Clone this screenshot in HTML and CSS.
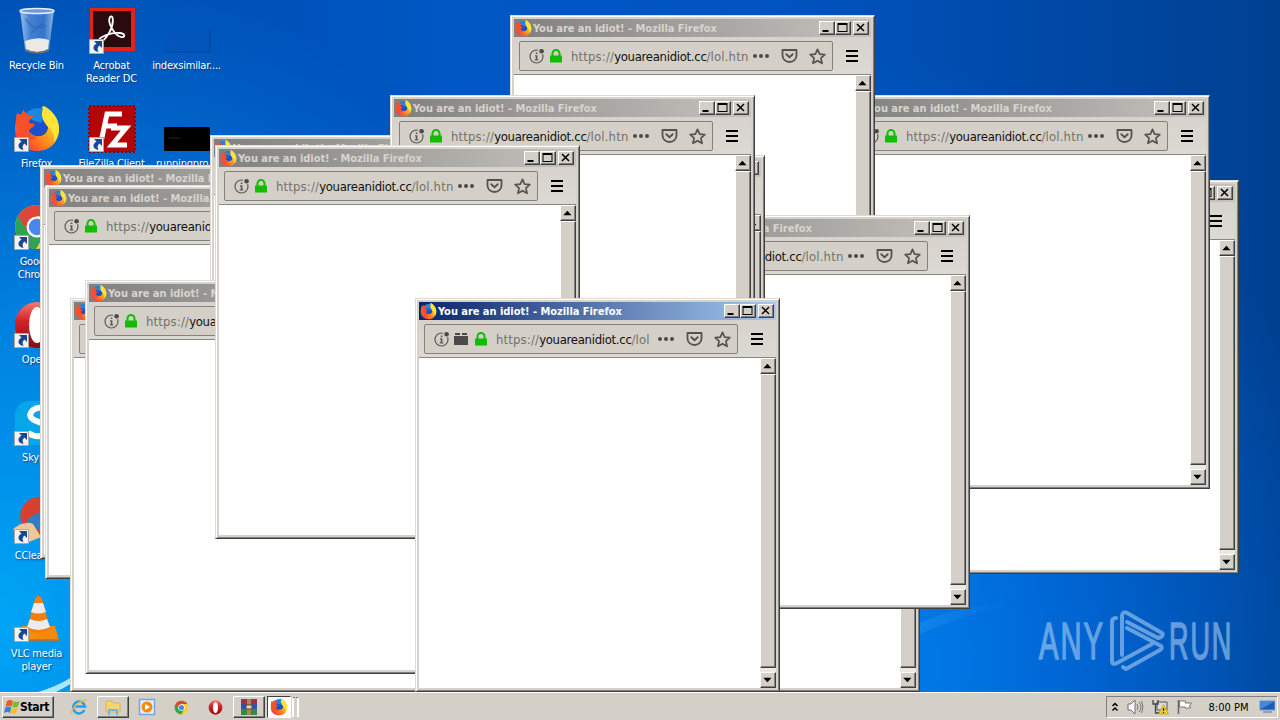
FILE: index.html
```html
<!DOCTYPE html>
<html lang="en">
<head>
<meta charset="UTF-8">
<meta name="viewport" content="width=device-width, initial-scale=1.0">
<title>Desktop</title>
<link rel="stylesheet" href="styles.css">
</head>
<body>
<svg class="defs" width="0" height="0">
    <defs>
        <linearGradient id="foxGrad" x1="1" y1="0" x2="0.1" y2="0.9">
            <stop offset="0" stop-color="#fff44f"/><stop offset="0.45" stop-color="#ffb01c"/><stop offset="0.75" stop-color="#ff6a22"/><stop offset="1" stop-color="#f0305a"/>
        </linearGradient>
        <linearGradient id="operaGrad" x1="0" y1="0" x2="0" y2="1">
            <stop offset="0" stop-color="#f47a72"/><stop offset="0.4" stop-color="#d4242a"/><stop offset="1" stop-color="#8c0a10"/>
        </linearGradient>
        <linearGradient id="glassGrad" x1="0" y1="0" x2="1" y2="0">
            <stop offset="0" stop-color="#b4d0f0"/><stop offset="0.3" stop-color="#4f8ad8"/><stop offset="0.7" stop-color="#3c7ace"/><stop offset="1" stop-color="#a4c4e8"/>
        </linearGradient>
        <linearGradient id="swoosh" x1="0" y1="0" x2="1" y2="0">
            <stop offset="0" stop-color="#3c9cf4" stop-opacity=".3"/><stop offset="1" stop-color="#3c9cf4" stop-opacity="0"/>
        </linearGradient>
        <symbol id="firefox" viewBox="0 0 48 48">
            <path d="M30 1c8 4 16 12 16 23 0 13-9 22-22 22S2 37 2 25c0-6 1-11 4-14l10 10z" fill="url(#foxGrad)"/>
            <path d="M13 8C18 3 25 2 31 4c4 5 6 13 4 19-1 6-6 9-12 8-6-1-9-6-9-12z" fill="#1a50c8"/>
            <path d="M13 8C18 3 25 2 31 4c0 6-1 11-3 14l-9-3z" fill="#1c86e4"/>
            <path d="M31 1c8 4 15 12 15 23 0 5-2 10-5 13 1-7-2-11-6-15-6-7-8-13-4-21z" fill="#ffe23a"/>
            <path d="M4 8l4 2 2-5 5 5 6 1c-3 2-5 4-5 7l6 1c-1 3-4 4-6 6 0 4 3 7 8 7-3 4-10 5-14 1C4 28 1 18 4 8z" fill="#f8502a"/>
        </symbol>
        <symbol id="chrome" viewBox="0 0 48 48">
            <circle cx="24" cy="24" r="22" fill="#fbcf2c"/>
            <path d="M24 24L5 13A22 22 0 0 0 23 46l11-19z" fill="#2fa353"/>
            <path d="M24 13h19a22 22 0 0 0-38 0l9 14z" fill="#e0453c"/>
            <circle cx="24" cy="24" r="10.5" fill="#fff"/>
            <circle cx="24" cy="24" r="8.2" fill="#4a86ee"/>
        </symbol>
        <symbol id="opera" viewBox="0 0 48 48">
            <ellipse cx="24" cy="24" rx="22" ry="23" fill="url(#operaGrad)"/>
            <ellipse cx="24" cy="24" rx="8" ry="18" fill="#fff"/>
        </symbol>
        <symbol id="shortcut" viewBox="0 0 15 15">
            <path d="M.5.5h14v14H.5z" fill="#f3f3f0" stroke="#a8a8a8"/>
            <path d="M5 2h8v7l-2.500-2.500C8.500 8 8 10 9.500 13 4 12 2.500 7.500 7.500 4.500z" fill="#1b4596"/>
        </symbol>
        <symbol id="info" viewBox="0 0 16 16">
            <circle cx="7.500" cy="8.500" r="6.500" fill="none" stroke="#5b5956" stroke-width="1.200"/>
            <circle cx="12.600" cy="3" r="3.600" fill="#d4d0c8"/>
            <circle cx="12.600" cy="3.200" r="2.300" fill="#4c4a48"/>
            <path d="M6.700 4.500h1.700v1.600H6.700zM6 7.200h2.400v4.300h1v1H5.700v-1h1V8.200H6z" fill="#5b5956"/>
        </symbol>
        <symbol id="lock" viewBox="0 0 14 14">
            <path d="M3.500 7V4.500a3.500 3.500 0 0 1 7 0V7" fill="none" stroke="#12bc00" stroke-width="2"/>
            <path d="M1 6.500h12V13.500H1z" fill="#12bc00"/>
        </symbol>
        <symbol id="addon" viewBox="0 0 14 14">
            <path d="M1 1h5v2H1zM8 1h5v2H8zM0 4h14v9H0z" fill="#4c4a48"/>
        </symbol>
        <symbol id="pocket" viewBox="0 0 16 16">
            <path d="M1 2h14v5.500a7 6.500 0 0 1-14 0z" fill="none" stroke="#55524f" stroke-width="1.800" stroke-linejoin="round"/>
            <path d="M4.800 6.200L8 9.300l3.200-3.100" fill="none" stroke="#55524f" stroke-width="1.900" stroke-linecap="round"/>
        </symbol>
        <symbol id="star" viewBox="0 0 16 16">
            <path d="M8 1.300l2 4.500 4.900.5-3.700 3.200 1.100 4.900L8 11.900l-4.300 2.500 1.100-4.900L1.100 6.300 6 5.800z" fill="none" stroke="#55524f" stroke-width="1.600" stroke-linejoin="round"/>
        </symbol>
    </defs>
</svg>

<div class="desktop">
    <svg class="wallpaper" width="1280" height="692" viewBox="0 0 1280 692">
        <path d="M38 692Q58 686 72 677V683Q64 688 56 692z" fill="#bdf0ff" opacity=".9"/>
        <path d="M915 625Q945 610 1010 600V604Q950 620 915 636z" fill="url(#swoosh)"/>
    </svg>

    <div class="icons">
        <div class="icon">
            <svg viewBox="0 0 48 48">
                <path d="M7 3h34l-5 40q-12 5-24 0z" fill="url(#glassGrad)" opacity=".85"/>
                <path d="M12 34q13-5 24-1l-1 9q-11 6-22 0z" fill="#eceae6"/>
                <path d="M12 42q12 6 24 0v2q-12 5-24 0z" fill="#77706a"/>
                <ellipse cx="24" cy="4" rx="17" ry="2.500" fill="#6b9ad2" stroke="#e4edf6" stroke-width="1.500"/>
                <path d="M13 12q8 14 20 6M18 26l12-10" stroke="#2b62b4" stroke-width="2" fill="none" opacity=".6"/>
            </svg>
            <span>Recycle Bin</span>
        </div>
        <div class="icon">
            <svg viewBox="0 0 48 48">
                <path d="M2 1h45v43H2z" fill="#e2231a"/><path d="M5 4h38v36H5z" fill="#2a0a0c"/>
                <path d="M22 10c4-3 4 8-1 16-4 7-9 11-10 8-1-4 13-9 21-8 6 1 5 5 1 4-7-2-14-15-11-20z" fill="none" stroke="#fff" stroke-width="1.800"/>
            </svg>
            <svg class="arrow"><use href="#shortcut"/></svg>
            <span>Acrobat Reader DC</span>
        </div>
        <div class="icon">
            <svg viewBox="0 0 48 48"><path d="M1 20h46v25H1z" fill="#0852b8" opacity=".4"/><path d="M1 45h46V22" fill="none" stroke="#063c92" stroke-width="1.500" opacity=".5"/></svg>
            <span>indexsimilar....</span>
        </div>
        <div class="icon">
            <svg><use href="#firefox"/></svg>
            <svg class="arrow"><use href="#shortcut"/></svg>
            <span>Firefox</span>
        </div>
        <div class="icon">
            <svg viewBox="0 0 48 48">
                <path d="M1 1h46v46H1z" fill="#b30508" stroke="#8a0406" stroke-width="2" stroke-dasharray="2 2"/>
                <path d="M13 37L19 9H34M16 21H29M23 23H38L24 40H39" fill="none" stroke="#fff" stroke-width="5"/>
            </svg>
            <svg class="arrow"><use href="#shortcut"/></svg>
            <span>FileZilla Client</span>
        </div>
        <div class="icon">
            <svg viewBox="0 0 48 48"><path d="M1 22h46v24H1z" fill="#000"/><path d="M5 33h12" stroke="#222"/></svg>
            <span>runningpro...</span>
        </div>
        <div class="icon">
            <svg><use href="#chrome"/></svg>
            <svg class="arrow"><use href="#shortcut"/></svg>
            <span>Google Chrome</span>
        </div>
        <div class="icon from-left">
            <svg><use href="#opera"/></svg>
            <svg class="arrow"><use href="#shortcut"/></svg>
            <span>Opera</span>
        </div>
        <div class="icon from-left">
            <svg viewBox="0 0 48 48">
                <rect x="2" y="2" width="44" height="44" rx="14" fill="#06a7ea"/>
                <path d="M36 12q-9-6-16-1-6 6 1 10l10 4q8 4 2 10-8 5-18-1" fill="none" stroke="#fff" stroke-width="6"/>
            </svg>
            <svg class="arrow"><use href="#shortcut"/></svg>
            <span>Skype</span>
        </div>
        <div class="icon from-left">
            <svg viewBox="0 0 48 48">
                <path d="M8 24A19 19 0 0 1 44 12v28H20z" fill="#d8402f"/>
                <path d="M40 10L22 17l-8 6 2 8 8 2 16-6z" fill="#2f7ec4"/>
                <path d="M0 32q12-9 20-5l8 13-12 5z" fill="#f6c796"/>
            </svg>
            <svg class="arrow"><use href="#shortcut"/></svg>
            <span>CCleaner</span>
        </div>
        <div class="icon from-left">
            <svg viewBox="0 0 48 48">
                <path d="M9 31h33l4 14H5z" fill="#f58a0b"/>
                <path d="M25 1q3 0 4 3l8 30q-12 8-23 0l8-30q1-3 3-3z" fill="#f57d0a"/>
                <path d="M21 8h9l3 9q-8 3-15 0zM17 24q8 4 17 0l3 8q-12 6-23 0z" fill="#ececec"/>
                <path d="M5 45h42" stroke="#d9690a" stroke-width="1.500"/>
            </svg>
            <svg class="arrow"><use href="#shortcut"/></svg>
            <span>VLC media player</span>
        </div>
    </div>

    <svg class="watermark" width="200" height="70" viewBox="0 0 200 70">
        <g fill="#a9ccf2" stroke="#a9ccf2" stroke-width="1.600">
            <text transform="translate(3 56) scale(.56 1)" x="0" y="0" textLength="114" lengthAdjust="spacing">ANY</text>
            <text transform="translate(133 56) scale(.52 1)" x="0" y="0" textLength="120" lengthAdjust="spacing">RUN</text>
        </g>
        <g fill="none" stroke="#a9ccf2" stroke-width="4" stroke-linecap="round" stroke-linejoin="round">
            <path d="M80 15q-4 0-4 4V59q1 3 5 1L116 41"/>
            <path d="M86 52V12q1-4 5-2L126 30q2 2-1 4l-3 1L91 19"/>
            <path d="M91 25L125 43q2 2-1 4L90 66l-3-2"/>
        </g>
    </svg>
    <div id="windows"></div>
</div>

<div class="taskbar">
    <div class="start">
        <svg width="16" height="16" viewBox="0 0 16 16">
            <path d="M3 2q3-2 6 0L7.500 7.500q-3-1.500-6 0z" fill="#ee5a24"/><path d="M9.700 2.200q3 1.500 6-.2L14 7.500q-3 2-6 .3z" fill="#7cba2c"/>
            <path d="M1.200 8.500q3-2 6 0L6 14q-3-2-6 0z" fill="#3a82d8"/><path d="M7.800 8.800q3 1.500 6-.2L12.300 14q-3 2-6 .3z" fill="#fbc02a"/>
        </svg>
        <b>Start</b>
    </div>
    <div class="task">
        <svg viewBox="0 0 18 18"><path d="M14.500 12a6 6 0 1 1 .5-3.500H5" fill="none" stroke="#2f9be4" stroke-width="2.400"/><path d="M2 16C-1 13 9 2 17 2" fill="none" stroke="#e9bf3a" stroke-width="1.400"/></svg>
    </div>
    <div class="task raised">
        <svg viewBox="0 0 18 18"><path d="M2 3h6l1 2h7v9H2z" fill="#f2d675" stroke="#d9b550"/><path d="M4 17v-6h10v6h-2v-4H6v4z" fill="#69b9e8"/></svg>
    </div>
    <div class="task">
        <svg viewBox="0 0 18 18"><path d="M1.500 1.500h15v15h-15z" fill="#e3effa" stroke="#72a9dc" stroke-width="1.500"/><circle cx="9" cy="9" r="5.500" fill="#f48a1c"/><path d="M7 6l5 3-5 3z" fill="#fff"/></svg>
    </div>
    <div class="task"><svg class="small"><use href="#chrome"/></svg></div>
    <div class="task"><svg class="small"><use href="#opera"/></svg></div>
    <div class="task raised">
        <svg viewBox="0 0 18 18"><path d="M1 1h16v5H1z" fill="#9c2f50"/><path d="M1 6h16v5H1z" fill="#3154a4"/><path d="M1 11h16v6H1z" fill="#2f8b45"/><path d="M7 1h4v16H7z" fill="#b58345"/><path d="M6 7h6v4H6z" fill="#e4d9b4" stroke="#5b472a"/></svg>
    </div>
    <div class="task pressed"><svg><use href="#firefox"/></svg></div>
    <div class="stack"></div>
    <div class="tray">
        <svg width="8" height="12" viewBox="0 0 8 12"><path d="M1.500 5L4 2.500 6.500 5M1.500 9.500L4 7l2.500 2.500" fill="none" stroke="#000" stroke-width="1.500"/></svg>
        <svg width="17" height="16" viewBox="0 0 17 16"><path d="M1 5h3l4-4v14l-4-4H1z" fill="#fff" stroke="#6f6f6f"/><path d="M10 5q2 3 0 6M12 3q4 5 0 10M14.500 2q3 6 0 12" fill="none" stroke="#777"/></svg>
        <svg width="17" height="16" viewBox="0 0 17 16"><path d="M5 3h10v8H5z" fill="#ddd" stroke="#555"/><path d="M1 1v4h5V1M3.500 5v9H8" fill="none" stroke="#444" stroke-width="1.300"/><path d="M11.500 5.500l5 9.500h-10z" fill="#fbd11b" stroke="#c39306" stroke-width=".7"/><path d="M11.500 9v3M11.500 13v1" stroke="#222" stroke-width="1.300"/></svg>
        <svg width="16" height="16" viewBox="0 0 16 16"><path d="M1.500 1v14" stroke="#666" stroke-width="1.500"/><path d="M2.500 2h6v2h6l-2 3 1 2H8V8H2.500z" fill="#fff" stroke="#777"/></svg>
        <span>8:00 PM</span>
        <svg width="16" height="14" viewBox="0 0 16 14"><path d="M1 1h15v9H1z" fill="#1c5cb8" stroke="#6c9bd6"/><path d="M1 1h15L2 9z" fill="#4488da"/><path d="M4 12h9" stroke="#88a" stroke-width="1.500"/></svg>
    </div>
</div>

<template id="windowTemplate">
    <div class="window">
        <div class="titlebar">
            <svg class="favicon"><use href="#firefox"/></svg>
            <b>You are an idiot! - Mozilla Firefox</b>
            <div class="controls">
                <i><svg viewBox="0 0 12 11"><path d="M2 8h6v2H2z"/></svg></i>
                <i><svg viewBox="0 0 12 11"><path d="M1 1h10v9H1zM2 3v6h8V3z" fill-rule="evenodd"/></svg></i>
                <i class="close"><svg viewBox="0 0 12 11"><path d="M2.500 2l7 7M9.500 2l-7 7" stroke="#000" stroke-width="1.500"/></svg></i>
            </div>
        </div>
        <div class="toolbar">
            <div class="urlbar">
                <svg width="16" height="16"><use href="#info"/></svg>
                <svg class="addon" width="14" height="14"><use href="#addon"/></svg>
                <svg width="14" height="14"><use href="#lock"/></svg>
                <div class="url">https://<em>youareanidiot.cc</em>/lol.htn</div>
                <div class="dots"><s></s><s></s><s></s></div>
                <svg class="pocket" width="17" height="16"><use href="#pocket"/></svg>
                <svg width="17" height="17"><use href="#star"/></svg>
            </div>
            <div class="menu"></div>
        </div>
        <div class="page">
            <div class="scrollbar">
                <i><svg viewBox="0 0 12 12"><path d="M2 8h7L5.500 4z"/></svg></i>
                <div class="thumb"></div>
                <i><svg viewBox="0 0 12 12"><path d="M2 4h7L5.500 8z"/></svg></i>
            </div>
        </div>
    </div>
</template>
<script src="script.js"></script>
</body>
</html>
```

FILE: styles.css
```css
* {
    box-sizing: border-box;
}
body {
    margin: 0;
    width: 1280px;
    height: 720px;
    overflow: hidden;
    display: flex;
    flex-direction: column;
    font-family: "DejaVu Sans Condensed", "DejaVu Sans", sans-serif;
    font-stretch: condensed;
    font-size: 11px;
}
svg {
    display: block;
    flex-shrink: 0;
}
.defs, .wallpaper {
    position: absolute;
}
.desktop {
    position: relative;
    height: 692px;
    overflow: hidden;
    background:
        radial-gradient(ellipse 560px 700px at 0 620px, rgba(0, 170, 250, 0.95), rgba(0, 150, 245, 0.7) 45%, rgba(0, 120, 230, 0) 100%),
        radial-gradient(ellipse 560px 620px at 800px 660px, #0088f5, rgba(0, 110, 225, 0.75) 50%, rgba(0, 72, 160, 0) 100%),
        linear-gradient(90deg, #0046aa, #0058c4 35%, #0054c0 60%, #004091 100%);
}

/* desktop icons */
.icons {
    display: grid;
    grid-template-columns: repeat(3, 75px);
    grid-auto-rows: 98px;
    position: relative;
}
.icon {
    position: relative;
    display: flex;
    flex-direction: column;
    align-items: center;
    padding-top: 7px;
    width: 73px;
    color: #fff;
    text-align: center;
    line-height: 13px;
    text-shadow: 1px 1px 2px #003a80;
}
.from-left {
    grid-column: 1;
}
.icon svg {
    width: 48px;
    height: 48px;
}
.icon span {
    margin-top: 4px;
    max-width: 72px;
    font-size: 11px;
    letter-spacing: -0.2px;
}
.icon .arrow {
    position: absolute;
    left: 14px;
    top: 39px;
    width: 15px;
    height: 15px;
}
.watermark {
    position: absolute;
    left: 1036px;
    top: 603px;
    opacity: 0.6;
    font: 52px "Liberation Sans", sans-serif;
}

/* browser windows */
.window {
    position: absolute;
    width: 365px;
    height: 394px;
    padding: 3px;
    border: 1px solid;
    border-color: #dedbd5 #404040 #404040 #dedbd5;
    background: #d6d2cb;
    display: flex;
    flex-direction: column;
    box-shadow: inset 1px 1px #fff, inset -1px -1px #808080;
}
.titlebar {
    display: flex;
    align-items: center;
    height: 18px;
    padding: 0 2px 0 1px;
    background: linear-gradient(90deg, #808080, #c6c3bd);
    color: #d8d4cd;
}
.titlebar b {
    flex: 1;
    margin-left: 1px;
    white-space: nowrap;
    font-size: 11px;
    letter-spacing: -0.04px;
}
.active .titlebar {
    background: linear-gradient(90deg, #0a246a, #a6caf0);
    color: #fff;
}
.favicon {
    width: 17px;
    height: 17px;
}
.controls {
    display: flex;
}
.controls i, .scrollbar i {
    width: 16px;
    height: 14px;
    background: #d4d0c8;
    border: 1px solid;
    border-color: #fff #404040 #404040 #fff;
    box-shadow: inset -1px -1px #808080;
}
.controls svg {
    width: 13px;
    height: 11px;
}
.controls .close {
    margin-left: 2px;
}
.toolbar {
    display: flex;
    height: 38px;
    padding: 4px 11px 3px 5px;
    border-bottom: 1px solid #8a8782;
    background: linear-gradient(#d7d3cc, #dcd9d4);
}
.urlbar {
    display: flex;
    align-items: center;
    width: 314px;
    height: 30px;
    padding: 0 6px 0 9px;
    border: 1px solid #85827e;
    border-radius: 2px;
    background: #d4d0c8;
}
.urlbar svg + svg {
    margin-left: 4px;
}
.addon {
    display: none;
}
.active .addon {
    display: block;
}
.active .addon + svg {
    margin-left: 6px;
}
.url {
    flex: 1;
    min-width: 0;
    overflow: hidden;
    white-space: nowrap;
    margin-left: 8px;
    color: #73716d;
    font-size: 13px;
    letter-spacing: 0.15px;
}
.url em {
    font-style: normal;
    color: #111;
    letter-spacing: -0.3px;
}
.dots {
    display: flex;
    gap: 2px;
    margin: 0 12px 0 5px;
}
.dots s {
    width: 4px;
    height: 4px;
    border-radius: 50%;
    background: #4c4a48;
}
.urlbar .pocket + svg {
    margin-left: 11px;
}
.menu {
    width: 12px;
    height: 12px;
    margin: 9px 0 0 13px;
    border-top: 2px solid #000;
    border-bottom: 2px solid #000;
    background: linear-gradient(transparent 3px, #000 3px, #000 5px, transparent 5px);
}
.page {
    flex: 1;
    display: flex;
    justify-content: flex-end;
    background: #fff;
}
.scrollbar {
    width: 16px;
    display: flex;
    flex-direction: column;
    background: #eae8e3;
}
.scrollbar i {
    height: 16px;
}
.scrollbar svg {
    width: 14px;
    height: 14px;
}
.thumb {
    flex: 1;
    margin-bottom: 4px;
    background: #d4d0c8;
    border: 1px solid;
    border-color: #fff #404040 #404040 #fff;
    box-shadow: inset -1px -1px #808080;
}

/* taskbar */
.taskbar {
    display: flex;
    align-items: center;
    height: 28px;
    padding: 1px 2px 0;
    border-top: 1px solid #fff;
    background: #d4d0c8;
}
.start, .raised {
    border: 1px solid;
    border-color: #fff #404040 #404040 #fff;
    box-shadow: inset -1px -1px #808080;
}
.start {
    display: flex;
    align-items: center;
    width: 52px;
    height: 22px;
    padding-left: 1px;
    margin-right: 9px;
}
.start b {
    font-size: 12px;
    letter-spacing: -0.3px;
}
.task {
    display: flex;
    align-items: center;
    justify-content: center;
    width: 32px;
    height: 22px;
    margin-right: 2px;
}
.task svg {
    width: 18px;
    height: 18px;
}
.task .small {
    width: 15px;
    height: 15px;
}
.pressed {
    width: 24px;
    margin-right: 1px;
    background: #fff;
    border: 1px solid;
    border-color: #404040 #fff #fff #404040;
}
.stack {
    width: 7px;
    height: 20px;
    border-left: 2px solid #fff;
    border-right: 2px solid #fff;
    border-top: 1px dashed #404040;
}
.tray {
    display: flex;
    align-items: center;
    width: 172px;
    height: 22px;
    margin-left: auto;
    padding: 0 2px 0 4px;
    border: 1px solid;
    border-color: #808080 #fff #fff #808080;
}
.tray svg + svg {
    margin-left: 8px;
}
.tray span {
    flex: 1;
    text-align: center;
    margin-left: 5px;
}
```

FILE: script.js
```javascript
// back to front
const positions = [
    [874, 180],
    [845, 95],
    [510, 15],
    [555, 298],
    [605, 215],
    [400, 155],
    [40, 165],
    [45, 185],
    [70, 298],
    [210, 135],
    [390, 95],
    [85, 280],
    [215, 145],
    [415, 298]
];

const template = document.getElementById('windowTemplate');
const container = document.getElementById('windows');

positions.forEach(([x, y], i) => {
    const win = template.content.firstElementChild.cloneNode(true);
    win.style.left = x + 'px';
    win.style.top = y + 'px';
    if (i === positions.length - 1) {
        win.classList.add('active');
        win.querySelector('.url').lastChild.textContent = '/lol';
    }
    container.appendChild(win);
});
```
